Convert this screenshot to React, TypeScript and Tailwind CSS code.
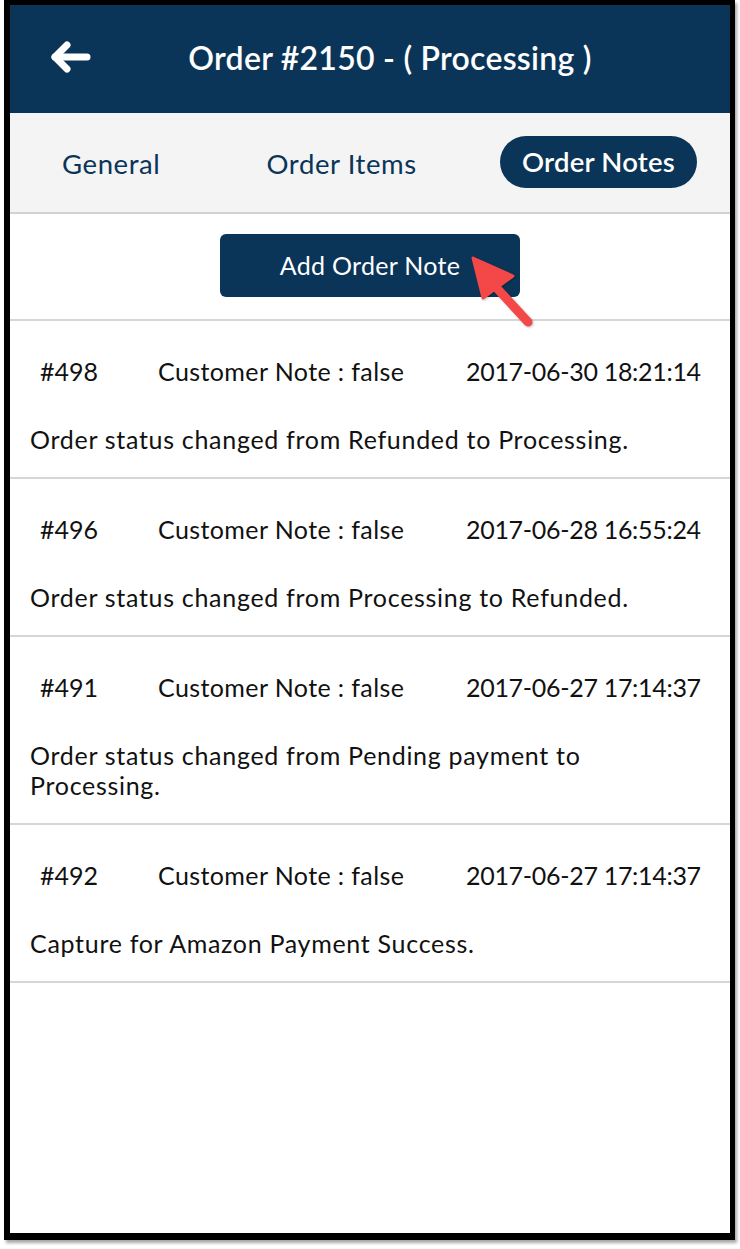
import { useState } from 'react';

interface Note {
  id: number;
  customer: boolean;
  date: string;
  text: string;
}

const notes: Note[] = [
  { id: 498, customer: false, date: '2017-06-30 18:21:14', text: 'Order status changed from Refunded to Processing.' },
  { id: 496, customer: false, date: '2017-06-28 16:55:24', text: 'Order status changed from Processing to Refunded.' },
  { id: 491, customer: false, date: '2017-06-27 17:14:37', text: 'Order status changed from Pending payment to Processing.' },
  { id: 492, customer: false, date: '2017-06-27 17:14:37', text: 'Capture for Amazon Payment Success.' },
];

const tabs = ['General', 'Order Items', 'Order Notes'];

export default function App() {
  const [tab, setTab] = useState('Order Notes');

  return (
    <div className="min-h-screen bg-white font-['Lato','Liberation_Sans',sans-serif]">
      <div className="ml-[4px] h-[1240px] w-[731px] border-t-[5px] border-r-[5px] border-b-[7px] border-l-[6px] border-black bg-white shadow-[2px_3px_3px_rgba(0,0,0,0.35)]">
        {/* header */}
        <div className="grid h-[108px] grid-cols-[82px_1fr_42px] items-center bg-[#0b3558] text-white">
          <button className="flex justify-end pb-[4px]">
            <svg width="42" height="32" viewBox="0 0 42 32" fill="none" stroke="white" strokeWidth="7" strokeLinecap="round" strokeLinejoin="round">
              <path d="M5 16 H37" />
              <path d="M17 4 L5 16 L17 28" />
            </svg>
          </button>
          <h1 className="pb-[2px] text-center text-[32px] font-semibold tracking-[0.25px]">Order #2150 - ( Processing )</h1>
          <div />
        </div>

        {/* tabs */}
        <div className="flex h-[101px] items-center border-b-2 border-[#d2d2d2] bg-[#f4f4f4] pb-[2px] text-[27.5px] text-[#0b3558]">
          {tabs.map((t, i) => {
            const active = tab === t;
            const spacing = i === 0 ? 'ml-[52px]' : i === 1 ? 'ml-[106px]' : 'ml-auto mr-[33px]';
            return (
              <button
                key={t}
                onClick={() => setTab(t)}
                className={`${spacing} ${
                  active
                    ? 'h-[52px] rounded-full bg-[#0b3558] px-[22px] font-semibold tracking-[0.2px] text-white'
                    : 'h-[52px] pt-[5px] tracking-[0.6px]'
                }`}
              >
                {t}
              </button>
            );
          })}
        </div>

        {/* add note */}
        <div className="relative flex justify-center border-b-2 border-[#d6d6d6] pt-[20px] pb-[22px]">
          <button className="h-[63px] w-[300px] rounded-[6px] bg-[#0b3558] text-[25px] tracking-[0.3px] text-white">
            Add Order Note
          </button>
          <svg className="absolute left-[455px] top-[36px]" width="72" height="82" viewBox="0 0 72 82">
            <g filter="drop-shadow(1px 1px 1px rgba(0,0,0,0.25))">
              <line x1="28" y1="34" x2="63" y2="72" stroke="#f44848" strokeWidth="9" strokeLinecap="round" />
              <polygon points="8,8 48,26 18,48" fill="#f44848" stroke="#f44848" strokeWidth="3" strokeLinejoin="round" />
            </g>
          </svg>
        </div>

        {/* notes */}
        {notes.map((n) => (
          <div key={n.id} className="border-b-2 border-[#d6d6d6] pt-[35px] pb-[23px] text-[25px] leading-[30px] text-[#111]">
            <div className="flex">
              <span className="w-[148px] pl-[30px]">#{n.id}</span>
              <span className="w-[308px] tracking-[0.4px]">Customer Note : {String(n.customer)}</span>
              <span className="tracking-[-0.3px]">{n.date}</span>
            </div>
            <p className="mt-[38px] px-[20px] tracking-[0.7px]">{n.text}</p>
          </div>
        ))}
      </div>
    </div>
  );
}
